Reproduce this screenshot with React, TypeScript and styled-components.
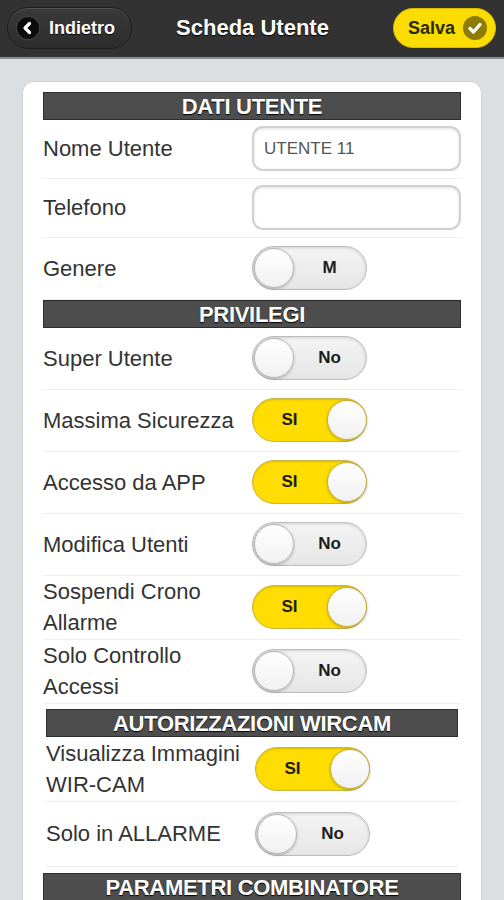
import React from "react";
import styled, { createGlobalStyle } from "styled-components";

const GlobalStyle = createGlobalStyle`
  html, body {
    margin: 0;
    padding: 0;
    background: #dcdfe2;
    font-family: "Liberation Sans", Arial, sans-serif;
  }
  * {
    box-sizing: border-box;
  }
`;

type RowData =
  | { label: string; kind: "input"; value: string }
  | { label: string; kind: "toggle"; on: boolean; text: string };

interface SectionData {
  title: string;
  inset?: boolean;
  rows: RowData[];
}

const sections: SectionData[] = [
  {
    title: "DATI UTENTE",
    rows: [
      { label: "Nome Utente", kind: "input", value: "UTENTE 11" },
      { label: "Telefono", kind: "input", value: "" },
      { label: "Genere", kind: "toggle", on: false, text: "M" },
    ],
  },
  {
    title: "PRIVILEGI",
    rows: [
      { label: "Super Utente", kind: "toggle", on: false, text: "No" },
      { label: "Massima Sicurezza", kind: "toggle", on: true, text: "SI" },
      { label: "Accesso da APP", kind: "toggle", on: true, text: "SI" },
      { label: "Modifica Utenti", kind: "toggle", on: false, text: "No" },
      { label: "Sospendi Crono Allarme", kind: "toggle", on: true, text: "SI" },
      { label: "Solo Controllo Accessi", kind: "toggle", on: false, text: "No" },
    ],
  },
  {
    title: "AUTORIZZAZIONI WIRCAM",
    inset: true,
    rows: [
      { label: "Visualizza Immagini WIR-CAM", kind: "toggle", on: true, text: "SI" },
      { label: "Solo in ALLARME", kind: "toggle", on: false, text: "No" },
    ],
  },
  {
    title: "PARAMETRI COMBINATORE",
    rows: [],
  },
];

const App: React.FunctionComponent = () => {
  return (
    <>
      <GlobalStyle />
      <Header>
        <BackButton>
          <BackIcon>
            <svg width="22" height="22" viewBox="0 0 22 22">
              <path
                d="M12.5 6.5 L8 11 L12.5 15.5"
                fill="none"
                stroke="#fff"
                strokeWidth="3.2"
                strokeLinecap="round"
                strokeLinejoin="round"
              />
            </svg>
          </BackIcon>
          Indietro
        </BackButton>
        <Title>Scheda Utente</Title>
        <SaveWrap>
          <SaveButton>
            Salva
            <CheckIcon>
              <svg width="24" height="24" viewBox="0 0 24 24">
                <path
                  d="M7 12.5 L10.5 16 L17 8.5"
                  fill="none"
                  stroke="#fff"
                  strokeWidth="3.2"
                  strokeLinecap="round"
                  strokeLinejoin="round"
                />
              </svg>
            </CheckIcon>
          </SaveButton>
        </SaveWrap>
      </Header>
      <Page>
        <Card>
          {sections.map((section) => (
            <Section key={section.title} $inset={section.inset}>
              <SectionTitle>{section.title}</SectionTitle>
              {section.rows.map((row) => (
                <Row
                  key={row.label}
                  $height={section.inset ? 65 : row.kind === "input" ? 59 : 62}
                >
                  <Label>{row.label}</Label>
                  {row.kind === "input" ? (
                    <TextBox>{row.value}</TextBox>
                  ) : (
                    <Toggle $on={row.on}>
                      <ToggleText $on={row.on}>{row.text}</ToggleText>
                      <Knob $on={row.on} />
                    </Toggle>
                  )}
                </Row>
              ))}
            </Section>
          ))}
        </Card>
      </Page>
    </>
  );
};

export default App;

const Header = styled.div`
  height: 59px;
  display: grid;
  grid-template-columns: 1fr auto 1fr;
  align-items: center;
  padding: 0 8px 1px 7px;
  background: #323232;
  border-bottom: 2px solid #8d8d8d;
`;

const BackButton = styled.div`
  justify-self: start;
  display: flex;
  align-items: center;
  gap: 10px;
  height: 42px;
  padding: 0 16px 0 9px;
  border-radius: 21px;
  background: linear-gradient(#3a3a3a, #2c2c2c);
  border: 1px solid #1e1e1e;
  box-shadow: inset 0 1px 0 rgba(255, 255, 255, 0.12);
  color: #fff;
  font-size: 18px;
  font-weight: 700;
  text-shadow: 0 1px 0 #000;
`;

const BackIcon = styled.span`
  display: flex;
  width: 22px;
  height: 22px;
  border-radius: 50%;
  background: #0c0c0c;
  box-shadow: 0 0 0 1px #444;
`;

const Title = styled.div`
  color: #fff;
  font-size: 22px;
  font-weight: 700;
  padding-left: 2px;
  text-shadow: 0 1px 1px #000;
`;

const SaveWrap = styled.div`
  display: flex;
  justify-content: flex-end;
`;

const SaveButton = styled.div`
  display: flex;
  align-items: center;
  gap: 8px;
  height: 40px;
  padding: 0 8px 0 14px;
  border-radius: 20px;
  background: #fbdc00;
  border: 1px solid #d9bd00;
  color: #2a2a00;
  font-size: 18px;
  font-weight: 700;
`;

const CheckIcon = styled.span`
  display: flex;
  width: 24px;
  height: 24px;
  border-radius: 50%;
  background: #8e7d05;
`;

const Page = styled.div`
  padding: 22px 22px 40px;
`;

const Card = styled.div`
  background: #fff;
  border: 1px solid #cfd2d5;
  border-radius: 12px;
  padding: 10px 20px 20px;
`;

const Section = styled.div<{ $inset?: boolean }>`
  margin: ${(p) => (p.$inset ? "5px 3px 6px" : "0")};
`;

const SectionTitle = styled.div`
  height: 28px;
  line-height: 27px;
  background: #4d4d4d;
  border: 1px solid #2e2e2e;
  color: #fff;
  text-align: center;
  font-size: 22px;
  font-weight: 700;
  letter-spacing: -0.3px;
  text-shadow: 0 1px 1px #000;
`;

const Row = styled.div<{ $height: number }>`
  display: grid;
  grid-template-columns: 209px 1fr;
  align-items: center;
  min-height: ${(p) => p.$height}px;
  padding: 0 0 1px;
  border-bottom: 1px solid #eeeeee;
`;

const Label = styled.div`
  color: #333;
  font-size: 22px;
  line-height: 31px;
  padding-right: 6px;
`;

const TextBox = styled.div`
  height: 45px;
  display: flex;
  align-items: center;
  padding: 0 10px;
  border: 2px solid #d0d0d0;
  border-radius: 11px;
  box-shadow: inset 0 1px 3px rgba(0, 0, 0, 0.12);
  color: #555;
  font-size: 17px;
`;

const Toggle = styled.div<{ $on: boolean }>`
  position: relative;
  width: 115px;
  height: 44px;
  border-radius: 22px;
  display: flex;
  align-items: center;
  background: ${(p) => (p.$on ? "#ffdd00" : "linear-gradient(#f4f4f4, #e6e6e6)")};
  border: 1px solid ${(p) => (p.$on ? "#cbb54a" : "#bdbdbd")};
  box-shadow: ${(p) =>
    p.$on ? "inset 0 1px 2px rgba(0,0,0,0.15)" : "inset 0 1px 3px rgba(0,0,0,0.15)"};
`;

const ToggleText = styled.span<{ $on: boolean }>`
  position: absolute;
  top: 0;
  bottom: 0;
  left: ${(p) => (p.$on ? "0" : "40px")};
  right: ${(p) => (p.$on ? "40px" : "0")};
  display: flex;
  align-items: center;
  justify-content: center;
  color: #1c1c1c;
  font-size: 17px;
  font-weight: 700;
`;

const Knob = styled.span<{ $on: boolean }>`
  position: absolute;
  top: 1px;
  left: ${(p) => (p.$on ? "74px" : "1px")};
  width: 40px;
  height: 40px;
  border-radius: 50%;
  background: linear-gradient(#ffffff, #f1f1f1);
  border: 1px solid ${(p) => (p.$on ? "#c2ad45" : "#b5b5b5")};
  box-shadow: 0 1px 3px rgba(0, 0, 0, 0.25);
`;
